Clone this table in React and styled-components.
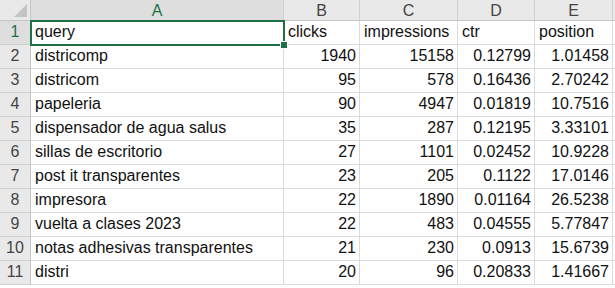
import React from "react";
import styled, { createGlobalStyle } from "styled-components";

const Global = createGlobalStyle`
  html, body {
    margin: 0;
    padding: 0;
    background: #ffffff;
  }
  body {
    font-family: "Liberation Sans", Arial, sans-serif;
    overflow: hidden;
  }
`;

const COLS = ["A", "B", "C", "D", "E", "F"];
const WIDTHS = [31, 253, 76, 98, 77, 78, 40];

const rows = [
  ["query", "clicks", "impressions", "ctr", "position"],
  ["districomp", 1940, 15158, 0.12799, 1.01458],
  ["districom", 95, 578, 0.16436, 2.70242],
  ["papeleria", 90, 4947, 0.01819, 10.7516],
  ["dispensador de agua salus", 35, 287, 0.12195, 3.33101],
  ["sillas de escritorio", 27, 1101, 0.02452, 10.9228],
  ["post it transparentes", 23, 205, 0.1122, 17.0146],
  ["impresora", 22, 1890, 0.01164, 26.5238],
  ["vuelta a clases 2023", 22, 483, 0.04555, 5.77847],
  ["notas adhesivas transparentes", 21, 230, 0.0913, 15.6739],
  ["distri", 20, 96, 0.20833, 1.41667],
];

const Sheet = styled.div`
  position: relative;
  display: grid;
  grid-template-columns: ${WIDTHS.map((w) => w + "px").join(" ")};
  grid-template-rows: 21px repeat(${rows.length}, 24px);
  width: 615px;
  height: 288px;
  overflow: hidden;
`;

const Corner = styled.div`
  background: #e9e9e9;
  border-right: 1px solid #c6c6c6;
  border-bottom: 1px solid #c6c6c6;
  position: relative;
  box-sizing: border-box;
  &::after {
    content: "";
    position: absolute;
    right: 3px;
    bottom: 3px;
    width: 0;
    height: 0;
    border-left: 13px solid transparent;
    border-bottom: 13px solid #c4c4c4;
  }
`;

const ColHead = styled.div`
  box-sizing: border-box;
  background: ${(p) => (p.$active ? "#dedede" : "#e9e9e9")};
  color: ${(p) => (p.$active ? "#1e7145" : "#444444")};
  border-right: 1px solid #d0d0d0;
  border-bottom: 1px solid #c6c6c6;
  font-size: 16px;
  display: flex;
  align-items: center;
  justify-content: center;
  padding-top: 1px;
`;

const RowHead = styled.div`
  box-sizing: border-box;
  background: ${(p) => (p.$active ? "#dedede" : "#e9e9e9")};
  color: ${(p) => (p.$active ? "#1e7145" : "#444444")};
  border-right: 1px solid #c6c6c6;
  border-bottom: 1px solid #d0d0d0;
  font-size: 16px;
  display: flex;
  align-items: flex-end;
  justify-content: center;
  padding-bottom: 3px;
`;

const Cell = styled.div`
  box-sizing: border-box;
  border-right: 1px solid #dadada;
  border-bottom: 1px solid #dadada;
  font-size: 16px;
  color: #111111;
  display: flex;
  align-items: flex-end;
  justify-content: ${(p) => (p.$num ? "flex-end" : "flex-start")};
  padding: 0 3px 3px 4px;
  white-space: nowrap;
  overflow: visible;
  position: relative;
`;

const Selection = styled.div`
  position: absolute;
  left: 30px;
  top: 20px;
  width: 255px;
  height: 26px;
  box-sizing: border-box;
  border: 2px solid #1e7145;
  pointer-events: none;
  &::after {
    content: "";
    position: absolute;
    right: -5px;
    bottom: -5px;
    width: 6px;
    height: 6px;
    background: #1e7145;
    border: 1px solid #ffffff;
  }
`;

export default function App() {
  return (
    <>
      <Global />
      <Sheet>
        <Corner />
        {COLS.map((c) => (
          <ColHead key={c} $active={c === "A"}>
            {c === "F" ? "" : c}
          </ColHead>
        ))}
        {rows.map((r, i) => (
          <React.Fragment key={i}>
            <RowHead $active={i === 0}>{i + 1}</RowHead>
            {r.map((v, j) => (
              <Cell key={j} $num={typeof v === "number"}>
                {v}
              </Cell>
            ))}
            <Cell />
          </React.Fragment>
        ))}
        <Selection />
      </Sheet>
    </>
  );
}
